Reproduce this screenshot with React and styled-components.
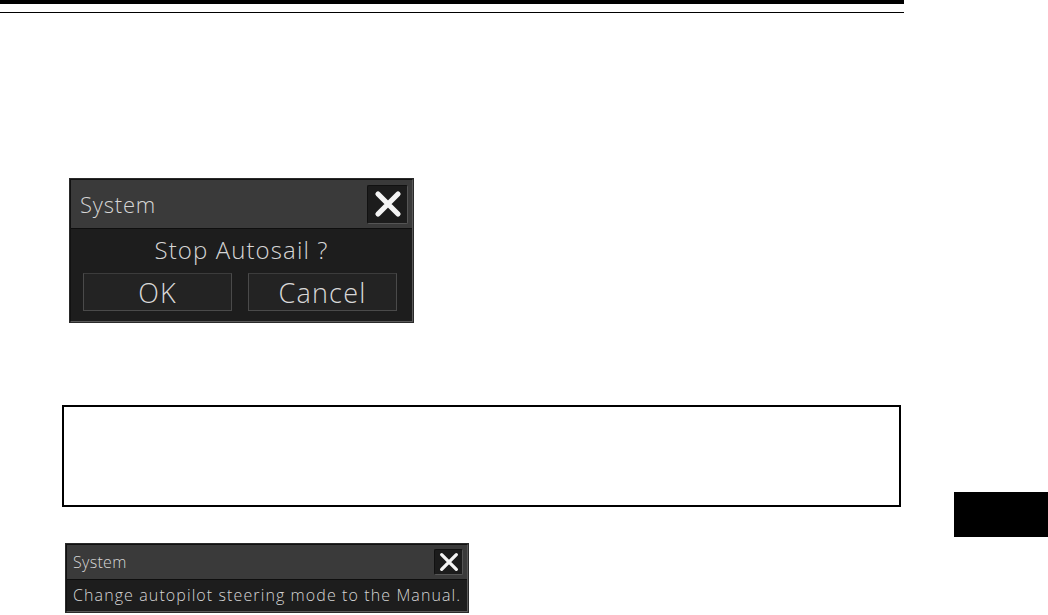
import React from "react";
import styled, { createGlobalStyle } from "styled-components";

const Global = createGlobalStyle`
  html, body {
    margin: 0;
    padding: 0;
    background: #fff;
  }
  body {
    width: 1048px;
    height: 615px;
    overflow: hidden;
    font-family: "Open Sans", "DejaVu Sans", sans-serif;
  }
`;

const Page = styled.div`
  display: flex;
  width: 1048px;
  height: 615px;
`;

const Main = styled.div`
  width: 954px;
  display: flex;
  flex-direction: column;
`;

const ThickRule = styled.div`
  width: 904px;
  height: 4px;
  background: #000;
`;

const ThinRule = styled.div`
  width: 904px;
  height: 1px;
  margin-top: 8px;
  background: #000;
`;

const Dialog = styled.div`
  box-sizing: border-box;
  width: ${(p) => p.$w}px;
  margin-left: ${(p) => p.$left}px;
  margin-top: ${(p) => p.$top}px;
  background: #1d1d1d;
  border: 1px solid #111;
  border-right-color: #5a5a5a;
  border-bottom-color: #5a5a5a;
  box-shadow: 0 0 0 1px #2a2a2a;
  color: #d6d6d6;
  font-weight: 300;
  display: flex;
  flex-direction: column;
`;

const TitleBar = styled.div`
  height: ${(p) => p.$h}px;
  background: #3a3a3a;
  border-bottom: 1px solid #0e0e0e;
  display: flex;
  align-items: center;
  justify-content: space-between;
  padding: 0 ${(p) => p.$pad}px 0 ${(p) => p.$padL}px;
  font-size: ${(p) => p.$fs}px;
  letter-spacing: ${(p) => p.$ls}px;
`;

const CloseBtn = styled.div`
  box-sizing: border-box;
  width: ${(p) => p.$w}px;
  height: ${(p) => p.$h}px;
  background: #1c1c1c;
  border: 1px solid #111;
  border-right-color: #555;
  border-bottom-color: #555;
  border-radius: 2px;
  display: flex;
  align-items: center;
  justify-content: center;
`;

const Message = styled.div`
  text-align: center;
  font-size: 24px;
  letter-spacing: 1.1px;
  line-height: 26px;
  padding-top: 8px;
`;

const ButtonRow = styled.div`
  display: flex;
  gap: 16px;
  padding: 10px 13px 10px 12px;
`;

const Button = styled.div`
  box-sizing: border-box;
  width: 149px;
  height: 38px;
  background: #232323;
  border: 1px solid #4a4a4a;
  border-top-color: #3c3c3c;
  display: flex;
  align-items: center;
  justify-content: center;
  font-size: 27px;
  letter-spacing: 1.2px;
  color: #d8d8d8;
`;

const Notice = styled.div`
  font-size: 16px;
  letter-spacing: 1.1px;
  padding: 4px 4px 5px 6px;
  white-space: nowrap;
`;

const EmptyBox = styled.div`
  box-sizing: border-box;
  width: 839px;
  height: 102px;
  margin-left: 62px;
  margin-top: ${(p) => p.$top}px;
  border: 2px solid #000;
`;

const SideTab = styled.div`
  width: 94px;
  height: 45px;
  margin-top: 492px;
  background: #000;
`;

const Cross = ({ size, stroke }) => (
  <svg width={size} height={size} viewBox="0 0 24 24">
    <path
      d="M4 4 L20 20 M20 4 L4 20"
      stroke="#f4f4f4"
      strokeWidth={stroke}
      strokeLinecap="round"
      fill="none"
    />
  </svg>
);

export default function App() {
  return (
    <Page>
      <Global />
      <Main>
        <ThickRule />
        <ThinRule />
        <Dialog $w={343} $left={70} $top={166}>
          <TitleBar $h={48} $pad={4} $padL={9} $fs={22} $ls={0.8}>
            <span>System</span>
            <CloseBtn $w={41} $h={39}>
              <Cross size={30} stroke={4.2} />
            </CloseBtn>
          </TitleBar>
          <Message>Stop Autosail ?</Message>
          <ButtonRow>
            <Button>OK</Button>
            <Button>Cancel</Button>
          </ButtonRow>
        </Dialog>
        <EmptyBox $top={83} />
        <Dialog $w={402} $left={66} $top={37}>
          <TitleBar $h={34} $pad={4} $padL={6} $fs={16} $ls={0.3}>
            <span>System</span>
            <CloseBtn $w={29} $h={26}>
              <Cross size={22} stroke={3.6} />
            </CloseBtn>
          </TitleBar>
          <Notice>Change autopilot steering mode to the Manual.</Notice>
        </Dialog>
      </Main>
      <SideTab />
    </Page>
  );
}
